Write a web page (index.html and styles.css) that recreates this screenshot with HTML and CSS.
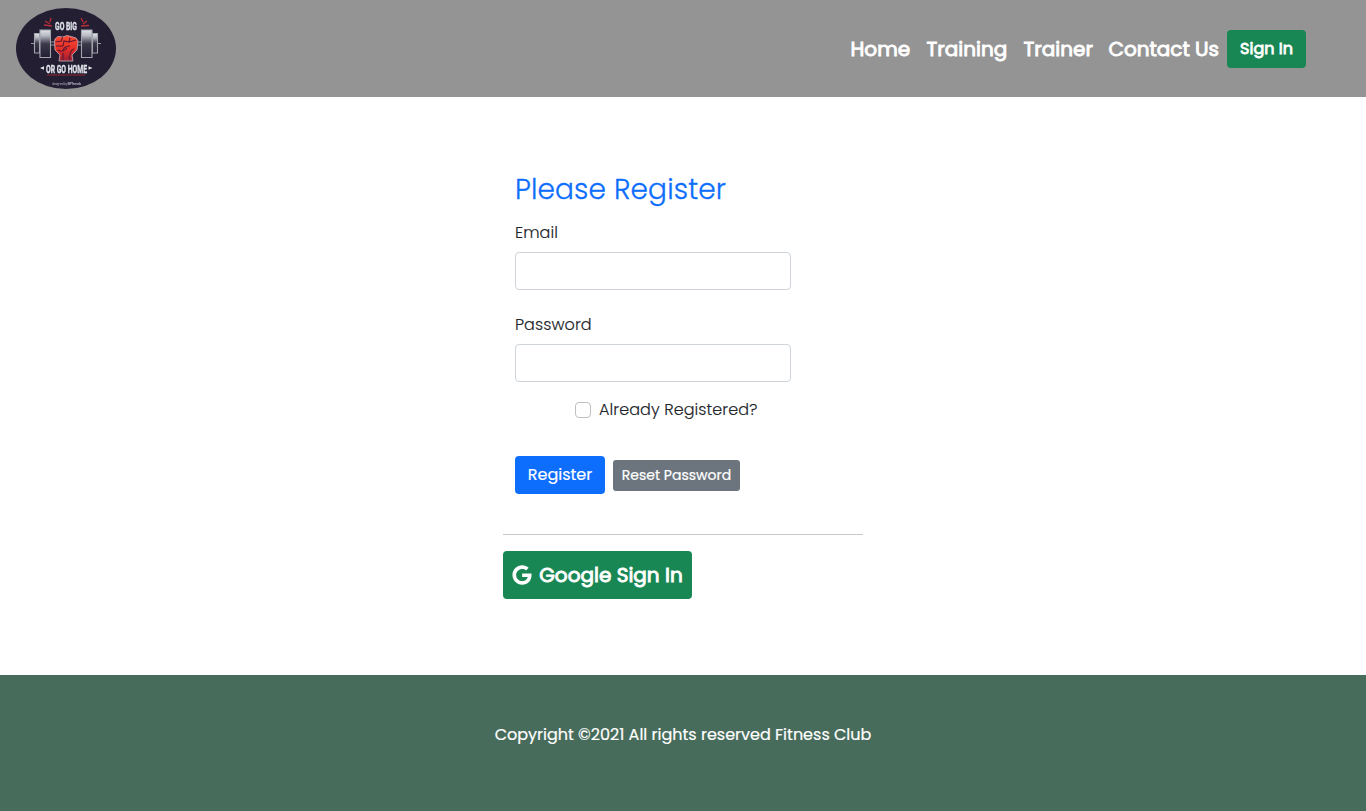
FILE: index.html
```html
<!DOCTYPE html>
<html lang="en">
<head>
<meta charset="utf-8">
<title>Fitness Club</title>
<link rel="stylesheet" href="styles.css">
</head>
<body>
<header class="navbar">
  <a class="brand" href="#" aria-label="Go big or go home">
    <svg class="logo" width="100" height="81" viewBox="0 0 100 81">
      <defs>
        <linearGradient id="plate" x1="0" y1="0" x2="0" y2="1">
          <stop offset="0" stop-color="#e0e3e8"/><stop offset=".2" stop-color="#b9bbc4"/><stop offset=".5" stop-color="#3c3a4b"/><stop offset="1" stop-color="#241e33"/>
        </linearGradient>
        <linearGradient id="fist" x1="0" y1="0" x2="0" y2="1">
          <stop offset="0" stop-color="#fa4a33"/><stop offset=".55" stop-color="#e52e27"/><stop offset="1" stop-color="#9a1f34"/>
        </linearGradient>
      </defs>
      <ellipse cx="50" cy="40.500" rx="50" ry="40.500" fill="#241e33"/>
      <g class="artwork">
        <g fill="url(#plate)" stroke="#a3a5ae" stroke-width="1.100">
          <path d="M18.500 25.500h5v19.500h-5z"/><path d="M24 22h10.500v27.500H24z"/>
          <path d="M76.500 25.500h5V45h-5z"/><path d="M65.500 22H76v27.500H65.500z"/>
        </g>
        <path d="M15 35.500h3M35 34h5M35 37h5M60 34h5M60 37h5M82 35.500h3" stroke="#9699a3" fill="none"/>
        <path d="M39 31l3-2.500 5 .5 4-1.500 4 1 5 1.500 2 3-1 9-5 5 1 6H43l1-6-5-5-.5-8z" fill="url(#fist)" stroke="#b9a3ad" stroke-width=".9"/>
        <path d="M39.500 34l6-1 1-4M40 38h7l1-5 5 1 1-4M53 34l7-2M54 38c-5 0-7 3-7 5M42 42c3 2 7 1 9-2M58 41c-3 1-4 4-4 7M47 45v7M53 48l1 4" stroke="#5b1935" stroke-width="1.100" fill="none"/>
        <path d="M29 13l5 3M35 10l-1 4M28 17l8 1M65 10l2 4M67 16l4-3M65 18l8-.5" stroke="#b52d38" stroke-width="1.400"/>
        <text x="39" y="21.800" class="logo-title" textLength="22" lengthAdjust="spacingAndGlyphs">GO BIG</text>
        <text x="30" y="65" class="logo-title" textLength="41" lengthAdjust="spacingAndGlyphs">OR GO HOME</text>
        <path d="M24 60l4-1.800v3.600zM76.500 60l-4-1.800v3.600z" fill="#e6e7ec"/>
        <path d="M31 67h38" stroke="#8f2630"/>
        <text x="36" y="77" class="logo-note" textLength="29">designed by <tspan font-weight="700">BPTrends</tspan></text>
      </g>
    </svg>
  </a>
  <nav class="links">
    <a class="link home" href="#">Home</a>
    <a class="link training" href="#">Training</a>
    <a class="link trainer" href="#">Trainer</a>
    <a class="link contact" href="#">Contact Us</a>
    <button class="btn sign-in">Sign In</button>
  </nav>
</header>
<main class="content">
  <form class="form">
    <h3 class="title">Please Register</h3>
    <label class="label" for="email">Email</label>
    <input class="input" id="email" type="email">
    <label class="label" for="password">Password</label>
    <input class="input input-last" id="password" type="password">
    <div class="check">
      <input class="checkbox" id="registered" type="checkbox">
      <label class="check-label" for="registered">Already Registered?</label>
    </div>
    <div class="actions">
      <button class="btn register" type="button">Register</button>
      <button class="btn reset" type="button">Reset Password</button>
    </div>
  </form>
  <hr class="rule">
  <button class="btn google">
    <svg class="g-icon" width="20" height="20" viewBox="0 0 488 512"><path fill="#fff" d="M488 261.800C488 403.300 391.100 504 248 504 110.800 504 0 393.200 0 256S110.800 8 248 8c66.800 0 123 24.500 166.300 64.900l-67.500 64.900C258.500 52.600 94.300 116.600 94.300 256c0 86.500 69.100 156.600 153.700 156.600 98.200 0 135-70.400 140.800-106.900H248v-85.300h236.100c2.300 12.700 3.900 24.900 3.900 41.400z"/></svg>
    <span>Google Sign In</span>
  </button>
</main>
<footer class="footer"><p class="copyright">Copyright ©2021 All rights reserved Fitness Club</p></footer>
</body>
</html>
```
FILE: styles.css
```css
* { box-sizing: border-box; }
body {
  margin: 0;
  min-height: 811px;
  display: flex;
  flex-direction: column;
  font: 300 16px/24px Poppins, Inter, "Open Sans", sans-serif;
  color: #212529;
  background: #fff;
  white-space: nowrap;
}
.navbar {
  height: 97px;
  padding: 8px 60px 8px 16px;
  display: flex;
  align-items: center;
  justify-content: space-between;
  background: #949494;
}
.brand, .logo { display: block; }
.artwork { filter: blur(0.35px); }
.logo-title { font: 700 11px Roboto, sans-serif; fill: #dfe3ea; stroke: #dfe3ea; stroke-width: 0.35px; }
.logo-note { font: 400 3.500px "Open Sans", sans-serif; fill: #aaa8b4; }
.links { display: flex; align-items: center; }
.link {
  margin-right: 16px;
  padding-left: 0.5px;
  color: #fff;
  font-size: 20px;
  font-weight: 400;
  line-height: 30px;
  text-decoration: none;
  -webkit-text-stroke: 0.9px #fff;
}
.home { width: 60px; }
.training { width: 81px; }
.trainer { width: 69px; }
.contact { width: 111px; margin-right: 8px; }
.btn {
  border: 0;
  border-radius: 4px;
  padding: 0;
  display: flex;
  align-items: center;
  justify-content: center;
  font: inherit;
  color: #fff;
}
.sign-in { width: 79px; height: 38px; background: #198754; font-weight: 400; -webkit-text-stroke: 0.8px #fff; }
.content { width: 360px; margin: 0 auto; padding-top: 73px; height: 578px; }
.form { padding: 0 72px 0 12px; }
.title {
  margin: 0 0 11px;
  font-size: 28px;
  line-height: 40px;
  font-weight: 300;
  letter-spacing: 0.15px;
  color: #0d6efd;
  -webkit-text-stroke: 0.3px #0d6efd;
}
.label { display: block; margin-bottom: 7px; }
.label, .check-label { letter-spacing: 0.08px; -webkit-text-stroke: 0.15px #212529; }
.input {
  display: block;
  width: 276px;
  height: 38px;
  margin-bottom: 23px;
  border: 1px solid #ced4da;
  border-radius: 4px;
  background: #fff;
}
.input-last { margin-bottom: 16px; }
.check { display: flex; align-items: center; margin-left: 60px; gap: 8px; height: 24px; }
.checkbox {
  appearance: none;
  width: 16px;
  height: 16px;
  margin: 0;
  border: 1px solid #bfbfbf;
  border-radius: 4px;
}
.actions { display: flex; align-items: center; gap: 8px; margin-top: 34px; }
.register, .reset, .copyright { font-weight: 400; -webkit-text-stroke: 0.2px #fff; }
.register { width: 90px; height: 38px; background: #0d6efd; }
.reset { width: 127px; height: 31px; border-radius: 3px; background: #6c757d; font-size: 14px; }
.rule { margin: 40px 0 16px; border: 0; height: 1px; background: #c8c9ca; }
.google { width: 189px; height: 48px; gap: 7px; background: #198754; font-size: 20px; font-weight: 400; -webkit-text-stroke: 0.9px #fff; }
.g-icon { -webkit-text-stroke: 0; }
.footer { flex: 1; padding-top: 48px; background: #476c5b; color: #fff; text-align: center; }
.copyright { margin: 0; }
```
